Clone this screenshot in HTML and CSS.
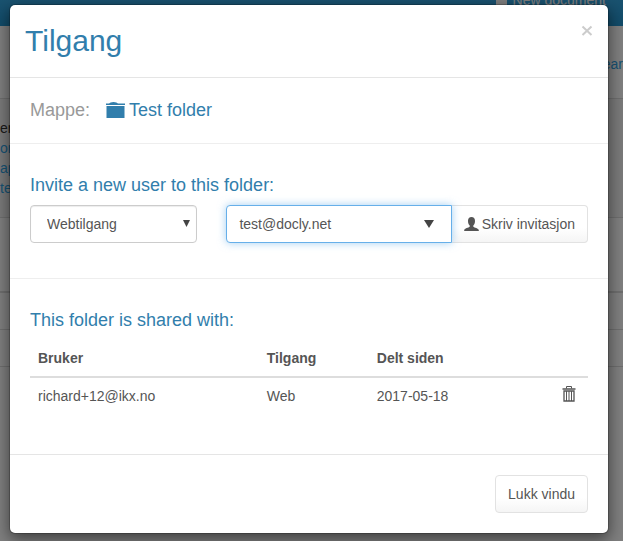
FILE: index.html
```html
<!DOCTYPE html>
<html lang="no">
<head>
    <meta charset="UTF-8">
    <meta name="viewport" content="width=device-width, initial-scale=1.0">
    <title>Tilgang</title>
    <link rel="stylesheet" href="styles.css">
</head>
<body>
    <!-- page behind the dialog -->
    <div class="page" aria-hidden="true">
        <div class="topbar"><span class="new-icon"></span><span>New document</span></div>
        <div class="searchbar">ear</div>
        <div class="sidebar">
            <span class="sidebar-title">en</span>
            <span>on</span>
            <span>ap</span>
            <span>te</span>
        </div>
        <div class="row row-tall"></div>
        <div class="row"></div>
        <div class="row"></div>
    </div>

    <div class="backdrop">
        <div class="modal" role="dialog" aria-labelledby="modal-title">
            <div class="modal-header">
                <h1 class="modal-title" id="modal-title">Tilgang</h1>
                <button type="button" class="close" aria-label="Lukk">
                    <svg width="12" height="12" viewBox="0 0 12 12"><path d="M1.5 1.5l9 8.5M10.5 1.5l-9 8.5" stroke="currentColor" stroke-width="2" fill="none"/></svg>
                </button>
            </div>

            <div class="folder">
                <span class="folder-label">Mappe:</span>
                <svg class="folder-icon" width="19" height="17" viewBox="0 0 19 17" fill="currentColor"><path d="M0 1.500h3Q4 0 7.500 0t4.500 1.500H19V3H0zM.500 4h18v12H.5z"/></svg>
                <span>Test folder</span>
            </div>

            <div class="section invite">
                <h4>Invite a new user to this folder:</h4>
                <form class="invite-form">
                    <div class="select-wrap">
                        <select class="control" aria-label="Tilgang">
                            <option>Webtilgang</option>
                        </select>
                        <svg class="arrow" width="7" height="7" viewBox="0 0 7 7"><path d="M0 0h7L3.500 7z" fill="currentColor"/></svg>
                    </div>
                    <div class="input-group">
                        <div class="input-wrap">
                            <input type="text" class="control focused" value="test@docly.net" aria-label="E-post">
                            <svg class="arrow" width="10" height="8" viewBox="0 0 10 8"><path d="M0 0h10L5 8z" fill="currentColor"/></svg>
                        </div>
                        <button type="button" class="btn btn-invite">
                            <svg width="15" height="15" viewBox="0 0 15 15" fill="currentColor"><path d="M7.500 0C9.700 0 11 1.500 11 4c0 2-.7 3.600-1.700 4.500v1.300c1 .9 5.200 1.600 5.500 3.200V14H.2v-1C.500 11.400 4.700 10.700 5.700 9.800V8.500C4.700 7.600 4 6 4 4c0-2.500 1.300-4 3.500-4z"/></svg>
                            Skriv invitasjon
                        </button>
                    </div>
                </form>
            </div>

            <div class="section shared">
                <h4>This folder is shared with:</h4>
                <table class="users">
                    <thead>
                        <tr>
                            <th class="col-user">Bruker</th>
                            <th class="col-access">Tilgang</th>
                            <th>Delt siden</th>
                            <th class="col-delete"></th>
                        </tr>
                    </thead>
                    <tbody>
                        <tr>
                            <td>richard+12@ikx.no</td>
                            <td>Web</td>
                            <td>2017-05-18</td>
                            <td class="col-delete">
                                <button type="button" class="delete" aria-label="Slett">
                                    <svg width="14" height="16" viewBox="0 0 14 16" fill="none" stroke="currentColor"><path d="M4.500 2.500v-2h5v2"/><path d="M.500 3h13" stroke-width="1.500"/><path d="M2 5h10v10H2z" stroke-width="1.300"/><path d="M4.500 5v10M7 5v10M9.500 5v10"/></svg>
                                </button>
                            </td>
                        </tr>
                    </tbody>
                </table>
            </div>

            <div class="modal-footer">
                <button type="button" class="btn">Lukk vindu</button>
            </div>
        </div>
    </div>
</body>
</html>
```
FILE: styles.css
```css
* {
    box-sizing: border-box;
}
body {
    margin: 0;
    font-family: "Liberation Sans", Arial, sans-serif;
    font-size: 14px;
    line-height: 20px;
    color: #555;
    background-color: #fff;
}
.page {
    position: absolute;
    top: 0;
    left: 0;
    right: 0;
    min-height: 100vh;
    overflow: hidden;
}
.topbar {
    display: flex;
    justify-content: flex-end;
    gap: 6px;
    height: 26px;
    padding-right: 17px;
    line-height: 1px;
    background: linear-gradient(#34a5e0, #2296d2);
    color: #fff;
}
.new-icon {
    width: 11px;
    height: 6px;
    background-color: #fff;
}
.searchbar {
    height: 73px;
    padding: 28px 0;
    border-bottom: 1px solid #ddd;
    text-align: right;
    color: #2fa4e7;
}
.sidebar {
    display: flex;
    flex-direction: column;
    width: 100%;
    height: 119px;
    padding-top: 19px;
    border-bottom: 1px solid #ddd;
    background-color: #f5f5f5;
    color: #2fa4e7;
}
.sidebar-title {
    color: #333;
}
.row {
    height: 37px;
    border-bottom: 1px solid #ddd;
}
.row-tall {
    height: 75px;
    border-bottom: 2px solid #ddd;
}
.backdrop {
    position: relative;
    min-height: 100vh;
    padding: 4px 14px 7px 9px;
    background-color: rgba(0, 0, 0, 0.5);
}
.modal {
    background-color: #fff;
    background-clip: padding-box;
    border: 1px solid rgba(0, 0, 0, 0.2);
    border-radius: 6px;
    box-shadow: 0 5px 15px rgba(0, 0, 0, 0.5);
}
.modal-header {
    display: flex;
    justify-content: space-between;
    align-items: flex-start;
    padding: 15px;
    border-bottom: 1px solid #e5e5e5;
}
.modal-title {
    margin: 0;
    font-size: 30px;
    font-weight: normal;
    line-height: 42px;
    color: #317eac;
}
.close {
    display: flex;
    padding: 5px 0;
    border: none;
    background: none;
    color: #ccc;
    cursor: pointer;
}
.folder {
    display: flex;
    align-items: center;
    padding: 20px;
    border-bottom: 1px solid #eee;
    font-size: 18px;
    line-height: 25px;
    color: #317eac;
}
.folder-label {
    margin-right: 16px;
    color: #999;
}
.folder-icon {
    margin-right: 4px;
}
.section {
    padding: 31px 20px 0;
}
.section h4 {
    margin: 0 0 10px;
    font-size: 18px;
    font-weight: normal;
    line-height: 20px;
    color: #317eac;
}
.invite {
    padding-bottom: 35px;
    border-bottom: 1px solid #eee;
}
.shared {
    padding-bottom: 40px;
}
.invite-form {
    display: flex;
    gap: 29px;
}
.select-wrap {
    position: relative;
    flex: 0 0 30%;
}
.input-group {
    display: flex;
    flex: 1;
}
.input-wrap {
    position: relative;
    flex: 1;
}
.control {
    width: 100%;
    height: 38px;
    padding: 8px 12px;
    border: 1px solid #ccc;
    border-radius: 4px;
    background-color: #fff;
    font: inherit;
    color: #555;
    box-shadow: inset 0 1px 1px rgba(0, 0, 0, 0.075);
}
select.control {
    appearance: none;
    padding-left: 16px;
}
.focused {
    border-color: #66afe9;
    border-radius: 4px 0 0 4px;
    outline: none;
    box-shadow: 0 0 8px rgba(102, 175, 233, 0.6);
}
.arrow {
    position: absolute;
    top: 15px;
    right: 18px;
    color: #444;
    pointer-events: none;
}
.select-wrap .arrow {
    right: 7px;
}
.btn {
    height: 38px;
    padding: 8px 12px;
    border: 1px solid #e2e2e2;
    border-radius: 4px;
    background: linear-gradient(#fff, #fff 60%, #f5f5f5);
    font: inherit;
    color: #555;
    white-space: nowrap;
    cursor: pointer;
}
.btn-invite {
    display: flex;
    align-items: center;
    gap: 3px;
    border-left: none;
    border-radius: 0 4px 4px 0;
}
.users {
    width: 100%;
    border-collapse: separate;
    border-spacing: 0;
    table-layout: fixed;
}
.users th,
.users td {
    height: 36px;
    padding: 8px;
    text-align: left;
}
.users th {
    border-bottom: 2px solid #ddd;
}
.col-user {
    width: 41%;
}
.col-access {
    width: 110px;
}
.users .col-delete {
    width: 60px;
    padding: 0 12px;
    text-align: right;
}
.delete {
    padding: 0;
    border: none;
    background: none;
    color: #555;
    cursor: pointer;
}
.delete svg {
    display: block;
}
.modal-footer {
    padding: 20px;
    border-top: 1px solid #e5e5e5;
    text-align: right;
}
.modal-footer .btn {
    display: inline-block;
    vertical-align: top;
}
```
